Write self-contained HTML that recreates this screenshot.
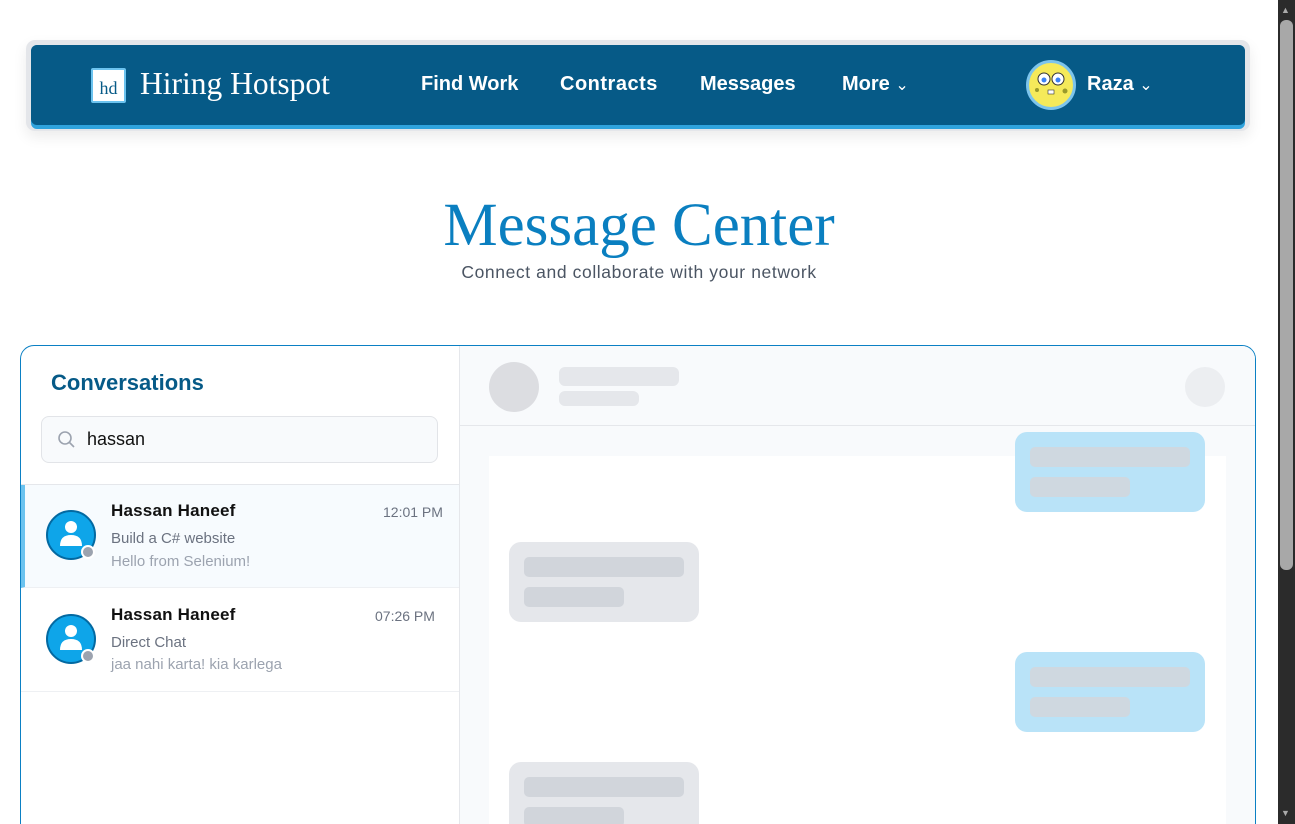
<!DOCTYPE html>
<html><head><style>
*{box-sizing:border-box;margin:0;padding:0}
html,body{width:1295px;height:824px;overflow:hidden}
body{background:#fff;font-family:"Liberation Sans",sans-serif;position:relative}
.abs{position:absolute}
.sb{left:1278px;top:0;width:17px;height:824px;background:#2b2b2b}
.thumb{left:1280px;top:20px;width:13px;height:550px;background:#a8a8a8;border-radius:6px}
.navo{left:26px;top:40px;width:1224px;height:91px;background:#e4e6ea;border-radius:9px;box-shadow:0 6px 14px rgba(0,0,0,.08)}
.navb{left:31px;top:45px;width:1214px;height:84px;background:#2fa3dd;border-radius:6px}
.nav{left:31px;top:45px;width:1214px;height:80px;background:#065a87;border-radius:6px}
.nl{color:#fff;font-size:20px;font-weight:bold;top:73px}
.ph{background:#e5e7eb;border-radius:6px}
.bl{background:#b9e3f8;border-radius:12px}
.gr{background:#e5e7eb;border-radius:12px}
.bar{background:#d1d5db;border-radius:5px;height:20px}
.nm{font-size:17px;color:#111;font-weight:bold;letter-spacing:.2px}
.sm{font-size:15px;color:#6b7280}
.av{width:50px;height:50px;border-radius:50%;background:#0ea5e9;border:2px solid #0369a1;overflow:hidden}
</style></head><body>
<div class="abs sb"></div><div class="abs thumb"></div>
<div class="abs" style="left:1281px;top:5px;color:#aaa;font-size:9px">▲</div>
<div class="abs" style="left:1281px;top:808px;color:#aaa;font-size:9px">▼</div>
<div class="abs navo"></div><div class="abs navb"></div><div class="abs nav"></div>
<div class="abs" style="left:91px;top:68px;width:35px;height:35px;background:#fff;border:2px solid #6cc3ef;border-radius:2px;font-family:'Liberation Serif',serif;color:#065a87;font-size:18px;text-align:center;line-height:36px">hd</div>
<div class="abs" style="left:140px;top:66px;color:#fff;font-family:'Liberation Serif',serif;font-size:31.5px">Hiring Hotspot</div>
<div class="abs nl" style="left:421px">Find Work</div>
<div class="abs nl" style="left:560px;letter-spacing:.5px">Contracts</div>
<div class="abs nl" style="left:700px">Messages</div>
<div class="abs nl" style="left:842px">More <span style="font-weight:normal;font-size:16px">⌄</span></div>
<div class="abs" style="left:1026px;top:60px;width:50px;height:50px;border-radius:50%;background:#f5ea5a;border:3px solid #7cc4ec"></div>
<svg class="abs" style="left:1032px;top:70px" width="38" height="30" viewBox="0 0 38 30"><circle cx="12" cy="9" r="6" fill="#fff" stroke="#333" stroke-width="1"/><circle cx="26" cy="9" r="6" fill="#fff" stroke="#333" stroke-width="1"/><circle cx="12" cy="10" r="2.5" fill="#3b82f6"/><circle cx="26" cy="10" r="2.5" fill="#3b82f6"/><circle cx="5" cy="20" r="2" fill="#9a9a2a"/><circle cx="33" cy="21" r="2.5" fill="#9a9a2a"/><rect x="16" y="20" width="6" height="4" fill="#fff" stroke="#333" stroke-width=".6"/></svg>
<div class="abs nl" style="left:1087px">Raza <span style="font-weight:normal;font-size:16px">⌄</span></div>
<div class="abs" style="left:0;width:1278px;top:191px;text-align:center;font-family:'Liberation Serif',serif;font-size:61px;color:#0a7fc0">Message Center</div>
<div class="abs" style="left:0;width:1278px;top:262px;text-align:center;font-size:17.5px;color:#4b5563;letter-spacing:.6px">Connect and collaborate with your network</div>
<div class="abs" style="left:20px;top:345px;width:1236px;height:600px;border:1px solid #0b80c4;border-radius:14px;overflow:hidden;background:#fff">
 <div class="abs" style="left:438px;top:0;width:798px;height:600px;background:#f8fafc;border-left:1px solid #e5e7eb"></div>
 <div class="abs" style="left:438px;top:79px;width:798px;height:1px;background:#e5e7eb"></div>
 <div class="abs" style="left:468px;top:16px;width:50px;height:50px;border-radius:50%;background:#dcdde1"></div>
 <div class="abs ph" style="left:538px;top:21px;width:120px;height:19px"></div>
 <div class="abs ph" style="left:538px;top:45px;width:80px;height:15px"></div>
 <div class="abs" style="left:1164px;top:21px;width:40px;height:40px;border-radius:50%;background:#eceef1"></div>
 <div class="abs" style="left:468px;top:110px;width:737px;height:500px;background:#fff"></div>
 <div class="abs bl" style="left:994px;top:86px;width:190px;height:80px"></div>
 <div class="abs bar" style="left:1009px;top:101px;width:160px;background:#cfd8e0"></div>
 <div class="abs bar" style="left:1009px;top:131px;width:100px;background:#cfd8e0"></div>
 <div class="abs gr" style="left:488px;top:196px;width:190px;height:80px"></div>
 <div class="abs bar" style="left:503px;top:211px;width:160px"></div>
 <div class="abs bar" style="left:503px;top:241px;width:100px"></div>
 <div class="abs bl" style="left:994px;top:306px;width:190px;height:80px"></div>
 <div class="abs bar" style="left:1009px;top:321px;width:160px;background:#cfd8e0"></div>
 <div class="abs bar" style="left:1009px;top:351px;width:100px;background:#cfd8e0"></div>
 <div class="abs gr" style="left:488px;top:416px;width:190px;height:80px"></div>
 <div class="abs bar" style="left:503px;top:431px;width:160px"></div>
 <div class="abs bar" style="left:503px;top:461px;width:100px"></div>
 <div class="abs" style="left:30px;top:24px;font-size:22px;color:#065a87;font-weight:bold">Conversations</div>
 <div class="abs" style="left:20px;top:70px;width:397px;height:47px;background:#f8fafc;border:1px solid #e2e4e8;border-radius:8px"></div>
 <svg class="abs" style="left:36px;top:84px" width="20" height="20" viewBox="0 0 20 20"><circle cx="8" cy="8" r="6" fill="none" stroke="#9ca3af" stroke-width="1.6"/><path d="M12.5 12.5 17 17" stroke="#9ca3af" stroke-width="1.6"/></svg>
 <div class="abs" style="left:66px;top:83px;font-size:18px;color:#111">hassan</div>
 <div class="abs" style="left:0;top:138px;width:438px;height:1px;background:#e5e7eb"></div>
 <div class="abs" style="left:0;top:139px;width:438px;height:103px;background:#f7fbfe;border-left:4px solid #6cc3ef;border-bottom:1px solid #eef0f3"></div>
 <div class="abs av" style="left:25px;top:164px"><svg width="46" height="46" viewBox="0 0 46 46"><circle cx="23" cy="15" r="6" fill="#fff"/><path d="M12 34 Q12 23 23 23 Q34 23 34 34 Z" fill="#fff"/></svg></div><div class="abs" style="left:60px;top:199px;width:14px;height:14px;border-radius:50%;background:#9ca3af;border:2px solid #fff"></div>
 <div class="abs nm" style="left:90px;top:155px">Hassan Haneef</div>
 <div class="abs sm" style="left:362px;top:158px;font-size:14px">12:01 PM</div>
 <div class="abs sm" style="left:90px;top:184px">Build a C# website</div>
 <div class="abs sm" style="left:90px;top:207px;color:#9ca3af">Hello from Selenium!</div>
 <div class="abs" style="left:0;top:345px;width:438px;height:1px;background:#eef0f3"></div>
 <div class="abs av" style="left:25px;top:268px"><svg width="46" height="46" viewBox="0 0 46 46"><circle cx="23" cy="15" r="6" fill="#fff"/><path d="M12 34 Q12 23 23 23 Q34 23 34 34 Z" fill="#fff"/></svg></div><div class="abs" style="left:60px;top:303px;width:14px;height:14px;border-radius:50%;background:#9ca3af;border:2px solid #fff"></div>
 <div class="abs nm" style="left:90px;top:259px">Hassan Haneef</div>
 <div class="abs sm" style="left:354px;top:262px;font-size:14px">07:26 PM</div>
 <div class="abs sm" style="left:90px;top:288px">Direct Chat</div>
 <div class="abs sm" style="left:90px;top:310px;color:#9ca3af">jaa nahi karta! kia karlega</div>
</div>
</body></html>
